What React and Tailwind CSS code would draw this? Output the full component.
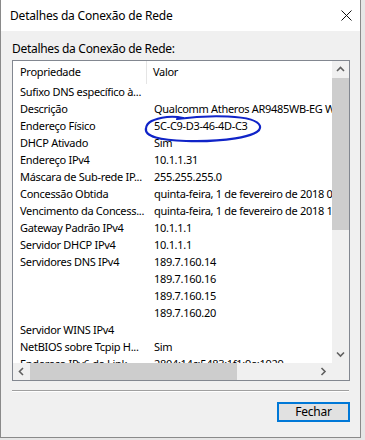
import React from "react";

const rows = [
  ["Sufixo DNS específico à...", ""],
  ["Descrição", "Qualcomm Atheros AR9485WB-EG Wireless Network Adapter"],
  ["Endereço Físico", "5C-C9-D3-46-4D-C3"],
  ["DHCP Ativado", "Sim"],
  ["Endereço IPv4", "10.1.1.31"],
  ["Máscara de Sub-rede IP...", "255.255.255.0"],
  ["Concessão Obtida", "quinta-feira, 1 de fevereiro de 2018 09:12:40"],
  ["Vencimento da Concess...", "quinta-feira, 1 de fevereiro de 2018 10:12:40"],
  ["Gateway Padrão IPv4", "10.1.1.1"],
  ["Servidor DHCP IPv4", "10.1.1.1"],
  ["Servidores DNS IPv4", "189.7.160.14"],
  ["", "189.7.160.16"],
  ["", "189.7.160.15"],
  ["", "189.7.160.20"],
  ["Servidor WINS IPv4", ""],
  ["NetBIOS sobre Tcpip H...", "Sim"],
  ["Endereço IPv6 de Link...", "2804:14c:5483:1f1:9e:1929"],
];

function Chevron({ dir }) {
  const pts = {
    up: "1,5 4.5,1.5 8,5",
    down: "1,1.5 4.5,5 8,1.5",
    left: "5,1 1.5,4.5 5,8",
    right: "1.5,1 5,4.5 1.5,8",
  }[dir];
  const vert = dir === "up" || dir === "down";
  return (
    <svg width={vert ? 9 : 7} height={vert ? 7 : 9} viewBox={vert ? "0 0 9 7" : "0 0 7 9"}>
      <polyline points={pts} fill="none" stroke="#606060" strokeWidth="1.6" />
    </svg>
  );
}

export default function App() {
  return (
    <div
      className="w-[365px] h-[440px] bg-[#e6e6e6] overflow-hidden"
      style={{ fontFamily: '"Noto Sans", "Open Sans", sans-serif' }}
    >
      <div className="relative w-[361px] h-[438px] border-l border-r border-b border-[#8a8a8a] bg-[#f0f0f0] flex flex-col text-[12px] text-black">
        {/* Title bar */}
        <div className="h-[31px] bg-white flex items-center justify-between pl-[9px] pr-[8px] shrink-0">
          <span className="leading-[16px] tracking-[-0.2px]">Detalhes da Conexão de Rede</span>
          <svg width="11" height="11" viewBox="0 0 11 11">
            <path d="M0.5 0.5 L10.5 10.5 M10.5 0.5 L0.5 10.5" stroke="#111" strokeWidth="1" fill="none" />
          </svg>
        </div>

        {/* Body */}
        <div className="flex-1 flex flex-col pl-[11px] pr-[10px] pt-[10px]">
          <div className="h-[16px] leading-[16px] tracking-[-0.3px]">Detalhes da Conexão de Rede:</div>

          {/* List view */}
          <div className="mt-[3px] w-[338px] h-[321px] border border-[#828790] bg-white flex flex-col text-[11px] tracking-[-0.3px]">
            <div className="flex h-[302px]">
              <div className="flex-1 min-w-0 overflow-hidden flex flex-col">
                <div className="h-[23px] flex shrink-0 items-center">
                  <div className="w-[134px] shrink-0 h-full pl-[7px] flex items-center border-r border-[#e5e5e5]">Propriedade</div>
                  <div className="pl-[6px] shrink-0">Valor</div>
                </div>
                {rows.map(([k, v], i) => (
                  <div key={i} className="h-[17px] flex items-center shrink-0 whitespace-nowrap">
                    <div className="w-[134px] shrink-0 pl-[7px] overflow-hidden">{k}</div>
                    <div className="pl-[7px] shrink-0">{v}</div>
                  </div>
                ))}
              </div>
              {/* vertical scrollbar */}
              <div className="w-[17px] shrink-0 bg-[#f0f0f0] flex flex-col">
                <div className="h-[17px] flex items-center justify-center">
                  <Chevron dir="up" />
                </div>
                <div className="h-[152px] bg-[#cdcdcd]" />
                <div className="flex-1" />
                <div className="h-[17px] flex items-center justify-center">
                  <Chevron dir="down" />
                </div>
              </div>
            </div>
            <div className="flex h-[17px]">
              <div className="flex-1 bg-[#f0f0f0] flex items-center">
                <div className="w-[17px] h-full flex items-center justify-center">
                  <Chevron dir="left" />
                </div>
                <div className="w-[207px] h-full bg-[#cdcdcd]" />
                <div className="flex-1" />
                <div className="w-[17px] h-full flex items-center justify-center">
                  <Chevron dir="right" />
                </div>
              </div>
              <div className="w-[17px] bg-[#f0f0f0]" />
            </div>
          </div>

          {/* separator */}
          <div className="mt-[9px] w-[337px] border-t border-[#a0a0a0] border-b border-b-white" />

          <div className="mt-[10px] flex justify-end">
            <button className="w-[73px] h-[20px] border-2 border-[#0078d7] bg-[#e1e1e1] flex items-center justify-center leading-none tracking-[-0.2px]">
              Fechar
            </button>
          </div>
        </div>

        {/* hand-drawn blue ellipse */}
        <svg className="absolute left-0 top-0 pointer-events-none" width="361" height="438" viewBox="0 0 361 438">
          <path
            d="M176 119 C205 115, 255 114, 259 126 C262 138, 215 142, 185 141 C160 140, 143 137, 145 128 C146 122, 152 119, 166 117 C172 116.5, 178 117, 182 118"
            fill="none"
            stroke="#1024c8"
            strokeWidth="2.2"
            strokeLinecap="round"
          />
        </svg>
      </div>
    </div>
  );
}
